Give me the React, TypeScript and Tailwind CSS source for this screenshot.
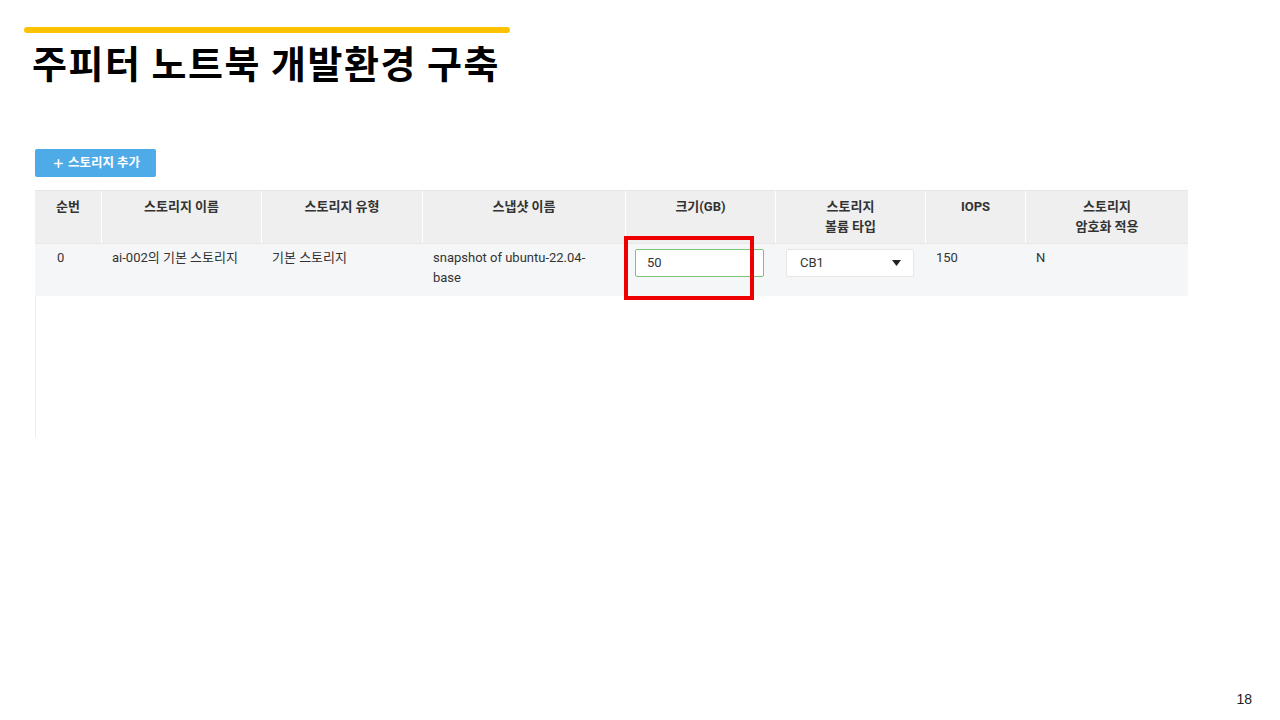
import { Plus } from 'lucide-react';

const cols = [
    { label: ['순번'], w: 'w-[66px]' },
    { label: ['스토리지 이름'], w: 'w-[160px]' },
    { label: ['스토리지 유형'], w: 'w-[161px]' },
    { label: ['스냅샷 이름'], w: 'w-[203px]' },
    { label: ['크기(GB)'], w: 'w-[150px]' },
    { label: ['스토리지', '볼륨 타입'], w: 'w-[150px]' },
    { label: ['IOPS'], w: 'w-[100px]' },
    { label: ['스토리지', '암호화 적용'], w: 'flex-1' },
];

export default function App() {
    return (
        <div
            className="relative w-[1280px] h-[720px] bg-white overflow-hidden text-[#222]"
            style={{ fontFamily: 'Roboto, "Noto Sans CJK KR", sans-serif' }}
        >
            {/* Slide header */}
            <div className="pt-[27px] pl-[24px]">
                <div className="w-[486px] h-[6px] rounded-full bg-[#fcc200]" />
                <h1
                    className="mt-[6px] ml-[8px] text-[38px] leading-[46px] font-bold text-black tracking-[1.5px]"
                    style={{ fontFamily: '"Noto Sans CJK KR", sans-serif' }}
                >
                    주피터 노트북 개발환경 구축
                </h1>
            </div>

            {/* Screen capture */}
            <div className="ml-[35px] mt-[64px] w-[1153px]">
                <button className="flex items-center gap-[3px] h-[28px] w-[121px] pl-[17px] rounded-[2px] bg-[#4eabe8] text-white text-[12.5px] font-bold">
                    <Plus className="w-[13px] h-[13px]" strokeWidth={3} />
                    스토리지 추가
                </button>

                <div className="mt-[13px]">
                    {/* Header */}
                    <div className="flex h-[53px] bg-[#efefef] border-t border-[#e6e6e6]">
                        {cols.map((c, i) => (
                            <div
                                key={i}
                                className={`${c.w} pt-[6px] text-center text-[13px] leading-[20px] font-bold text-[#333] ${i > 0 ? 'border-l border-white' : ''}`}
                            >
                                {c.label.map((l) => (
                                    <div key={l}>{l}</div>
                                ))}
                            </div>
                        ))}
                    </div>

                    {/* Row */}
                    <div className="flex h-[53px] bg-[#f5f6f7] border-t border-[#e8e8e8] text-[13px] leading-[20px] text-[#333]">
                        <div className="w-[66px] pl-[22px] pt-[4px]">0</div>
                        <div className="w-[160px] pl-[11px] pt-[4px]">ai-002의 기본 스토리지</div>
                        <div className="w-[161px] pl-[11px] pt-[4px]">기본 스토리지</div>
                        <div className="w-[203px] pl-[11px] pt-[4px] pr-[30px]">snapshot of ubuntu-22.04-base</div>
                        <div className="w-[150px] pl-[10px] pt-[5px]">
                            <div className="h-[28px] w-[129px] flex items-center pl-[11px] bg-white border border-[#7ac57a] rounded-[2px]">
                                50
                            </div>
                        </div>
                        <div className="w-[150px] pl-[11px] pt-[5px]">
                            <div className="h-[28px] w-[128px] flex items-center justify-between pl-[13px] pr-[12px] bg-white border border-[#e6e6e6] rounded-[2px]">
                                <span>CB1</span>
                                <svg width="9" height="6" viewBox="0 0 9 6">
                                    <path d="M0 0h9L4.5 6z" fill="#222" />
                                </svg>
                            </div>
                        </div>
                        <div className="w-[100px] pl-[11px] pt-[4px]">150</div>
                        <div className="flex-1 pl-[11px] pt-[4px]">N</div>
                    </div>

                    {/* Empty body */}
                    <div className="h-[141px] border-l border-[#ececec]" />
                </div>
            </div>

            {/* Highlight annotation */}
            <div className="absolute left-[624px] top-[236px] w-[130px] h-[64px] border-[4px] border-[#ee0000]" />

            {/* Page number */}
            <div
                className="absolute right-[28px] bottom-[10px] text-[14px] text-[#222]"
                style={{ fontFamily: '"Liberation Sans", sans-serif' }}
            >
                18
            </div>
        </div>
    );
}
